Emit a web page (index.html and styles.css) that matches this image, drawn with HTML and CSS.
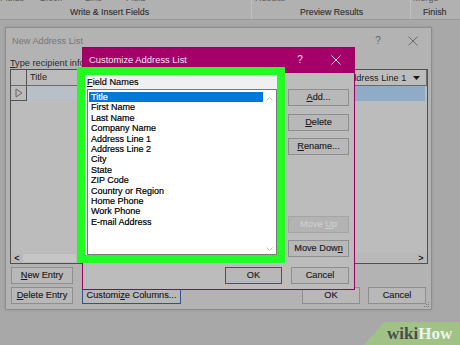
FILE: index.html
```html
<!DOCTYPE html>
<html lang="en">
<head>
<meta charset="utf-8">
<title>Customize Address List</title>
<link rel="stylesheet" href="styles.css">
</head>
<body>
<div class="screen">
  <header class="ribbon">
    <div class="group g1">
      <div class="frag"><span class="f1">Fields</span><span class="f2">Block</span><span class="f3">Line</span><span class="f4">Field</span></div>
      <div class="glabel">Write &amp; Insert Fields</div>
    </div>
    <div class="group g2">
      <div class="frag"><span class="f5">Results</span></div>
      <div class="glabel">Preview Results</div>
    </div>
    <div class="group g3">
      <div class="frag"><span class="f6">Merge</span></div>
      <div class="glabel">Finish</div>
    </div>
  </header>

  <section class="win win1">
    <div class="w1-title">
      <span class="w1-name">New Address List</span>
      <span class="w1-help">?</span>
      <span class="w1-close"><svg width="10" height="10" viewBox="0 0 10 10"><path d="M0.5 0.5L9.5 9.5M9.5 0.5L0.5 9.5" stroke="#6a6a6a" stroke-width="1" fill="none"/></svg></span>
    </div>
    <div class="w1-info"><u>T</u>ype recipient information in the table. To add more entries, click New Entry.</div>
    <div class="table">
      <div class="trow thead">
        <div class="cell sel"></div>
        <div class="cell th">Title</div>
        <div class="cell th">First Name</div>
        <div class="cell th">Last Name</div>
        <div class="cell th th-dd"><span>Address Line 1</span><svg width="7" height="4" viewBox="0 0 7 4"><path d="M0 0H7L3.5 4Z" fill="#1a1a1a"/></svg></div>
      </div>
      <div class="trow tdata">
        <div class="cell sel"><svg width="8" height="10" viewBox="0 0 8 10"><path d="M1 1L7 5L1 9Z" fill="none" stroke="#666" stroke-width="1"/></svg></div>
        <div class="cell td"></div>
        <div class="cell td"></div>
        <div class="cell td"></div>
        <div class="cell td cur"></div>
      </div>
      <div class="tfill"></div>
      <div class="hscroll">
        <span class="arr">&lt;</span><span class="thumb"></span><span class="track"></span><span class="arr">&gt;</span>
      </div>
    </div>
    <div class="w1-actions">
      <div class="arow"><button class="btn b-w1"><u>N</u>ew Entry</button></div>
      <div class="arow">
        <button class="btn b-w1"><u>D</u>elete Entry</button>
        <button class="btn b-cc">Customi<u>z</u>e Columns...</button>
        <span class="grow"></span>
        <button class="btn b-ok">OK</button>
        <button class="btn b-ok b-cancel">Cancel</button>
      </div>
    </div>
    <svg class="grip" width="6" height="6" viewBox="0 0 6 6"><g fill="#7d7d7d"><rect x="4" y="0" width="1" height="1"/><rect x="2" y="2" width="1" height="1"/><rect x="4" y="2" width="1" height="1"/><rect x="0" y="4" width="1" height="1"/><rect x="2" y="4" width="1" height="1"/><rect x="4" y="4" width="1" height="1"/></g></svg>
  </section>

  <section class="win win2">
    <div class="w2-title">
      <span class="w2-name">Customize Address List</span>
      <span class="w2-help">?</span>
      <span class="w2-close"><svg width="10" height="10" viewBox="0 0 10 10"><path d="M0.5 0.5L9.5 9.5M9.5 0.5L0.5 9.5" stroke="#f3e3ee" stroke-width="1" fill="none"/></svg></span>
    </div>
    <div class="w2-body">
      <div class="w2-main">
        <div class="fields">
          <div class="flabel"><u>F</u>ield Names</div>
          <div class="listbox">
            <ul class="items">
              <li class="on">Title</li>
              <li>First Name</li>
              <li>Last Name</li>
              <li>Company Name</li>
              <li>Address Line 1</li>
              <li>Address Line 2</li>
              <li>City</li>
              <li>State</li>
              <li>ZIP Code</li>
              <li>Country or Region</li>
              <li>Home Phone</li>
              <li>Work Phone</li>
              <li>E-mail Address</li>
            </ul>
            <div class="vscroll">
              <svg width="7" height="4" viewBox="0 0 7 4"><path d="M0.5 3.5L3.5 0.5L6.5 3.5" fill="none" stroke="#c2c2c2" stroke-width="1"/></svg>
              <svg width="7" height="4" viewBox="0 0 7 4"><path d="M0.5 0.5L3.5 3.5L6.5 0.5" fill="none" stroke="#c2c2c2" stroke-width="1"/></svg>
            </div>
          </div>
        </div>
        <div class="btncol">
          <button class="btn b2 b-add"><u>A</u>dd...</button>
          <button class="btn b2 b-del"><u>D</u>elete</button>
          <button class="btn b2 b-ren"><u>R</u>ename...</button>
          <button class="btn b2 b-up" disabled>Move <u>U</u>p</button>
          <button class="btn b2 b-down">Move Dow<u>n</u></button>
        </div>
      </div>
      <div class="w2-foot">
        <button class="btn b2ok">OK</button>
        <button class="btn b2c">Cancel</button>
      </div>
    </div>
  </section>

  <div class="logo"><span class="wk">wiki</span><span class="hw">How</span></div>
</div>
</body>
</html>
```

FILE: styles.css
```css
* { box-sizing: border-box; }
html, body { margin: 0; padding: 0; }
body {
  width: 460px;
  height: 345px;
  overflow: hidden;
  background: #a8a8a8;
  font-family: "Liberation Sans", Arial, sans-serif;
  color: #1d1d1d;
}
.screen { position: relative; width: 460px; height: 345px; overflow: hidden; background: #a8a8a8; }

/* ribbon */
.ribbon { display: flex; height: 20px; background: #b1b1b1; border-bottom: 1px solid #9b9b9b; }
.group { display: flex; flex-direction: column; justify-content: space-between; height: 19px; border-right: 1px solid #c1c1c1; }
.g1 { width: 252px; }
.g2 { width: 159px; }
.g3 { flex: 1; border-right: none; }
.frag { height: 3px; overflow: hidden; display: flex; color: #5c5c5c; font-size: 9px; white-space: nowrap; }
.frag span { line-height: 10px; margin-top: -7px; }
.f2 { margin-left: 16px; }
.f3 { margin-left: 23px; }
.f4 { margin-left: 24px; }
.f5 { margin-left: 3px; }
.f6 { margin-left: 2px; }
.glabel { font-size: 8.8px; line-height: 11px; padding-bottom: 1px; color: #333; white-space: nowrap; -webkit-text-stroke: 0.15px #333; }
.g1 .glabel { padding-left: 70px; }
.g2 .glabel { padding-left: 48px; }
.g3 .glabel { padding-left: 12px; }

/* windows */
.win { position: absolute; }

.win1 {
  left: 5px; top: 27px; width: 427px; height: 283px;
  background: #b3b3b3;
  border: 1px solid #8d8d8d;
  box-shadow: 0 0 3px rgba(0,0,0,0.12);
  display: flex; flex-direction: column;
}
.w1-title { height: 25px; flex: none; display: flex; align-items: center; padding-left: 6px; font-size: 9.2px; color: #767676; }
.w1-name { flex: 1; }
.w1-help { width: 16px; text-align: center; font-size: 10px; color: #666; }
.w1-close { width: 20px; margin: 0 8px 0 17px; display: flex; justify-content: center; }
.w1-info { margin-top: 4px; padding-left: 4px; font-size: 9.2px; line-height: 12px; color: #2b2b2b; white-space: nowrap; overflow: hidden; flex: none; }

.table {
  margin: 0 3px 0 4px; height: 195px; flex: none;
  border: 1px solid #4f4f4f; background: #bcbcbc;
  display: flex; flex-direction: column;
}
.trow { display: grid; grid-template-columns: 16px 100px 110px 1fr 85px; height: 15px; flex: none; }
.thead { height: 16px; border-bottom: 1px solid #6a6a6a; }
.cell { font-size: 9.2px; line-height: 14px; color: #222; white-space: nowrap; overflow: hidden; }
.th { border-right: 1px solid #6f6f6f; padding-left: 3px; }
.th-dd { display: flex; align-items: center; justify-content: space-between; padding-right: 6px; }
.sel { border-right: 1px solid #555; display: flex; align-items: center; justify-content: center; }
.tdata .sel { border-bottom: 1px solid #555; }
.td { background: #b8bfc6; }
.td.cur { background: #8eabc7; margin-right: 2px; }
.tfill { flex: 1; }
.hscroll { height: 10px; flex: none; display: flex; align-items: center; background: #b9b9b9; }
.arr { width: 12px; text-align: center; font-size: 9px; font-weight: bold; line-height: 10px; color: #222; }
.thumb { width: 53px; height: 8px; background: #c6c6c6; }
.track { flex: 1; }

.w1-actions { padding: 3px 5px 0 5px; display: flex; flex-direction: column; gap: 3px; }
.arow { display: flex; gap: 9px; }
.grow { flex: 1; }
.btn {
  height: 17px; margin: 0; padding: 0;
  border: 1px solid #8e8e8e; background: #b8b8b8;
  font-family: inherit; font-size: 9.2px; line-height: 15px; color: #1c1c1c;
  text-align: center; white-space: nowrap;
  -webkit-text-stroke: 0.15px currentColor;
}
.b-w1 { width: 62px; }
.b-cc { width: 99px; border-color: #33518c; }
.b-ok { width: 58px; }
.b-cancel { margin-left: -1px; }
.grip { position: absolute; right: 1px; bottom: 1px; }

/* customize dialog */
.win2 {
  left: 82px; top: 47px; width: 273px; height: 243px;
  border: 1px solid #9c005b; background: #bcbcbc;
  display: flex; flex-direction: column;
}
.w2-title { height: 25px; flex: none; background: #a5006a; color: #f2e4ee; display: flex; align-items: center; padding: 0 0 2px 6px; font-size: 9.4px; }
.w2-name { flex: 1; }
.w2-help { width: 16px; text-align: center; font-size: 10px; margin-right: 18px; }
.w2-close { width: 20px; margin-right: 8px; display: flex; justify-content: center; }
.w2-body { padding: 2px 5px 5px 2px; }
.w2-main { display: flex; gap: 11px; }
.fields {
  width: 192px; height: 180px; flex: none;
  background: #f0f0f0; outline: 8px solid #22fc22;
  padding-left: 2px; display: flex; flex-direction: column;
}
.flabel { height: 14px; line-height: 14px; font-size: 9.2px; color: #000; -webkit-text-stroke: 0.15px #000; }
.listbox { flex: 1; border: 1px solid #7a7a7a; background: #fff; display: flex; }
.items { flex: 1; list-style: none; margin: 0; padding: 2px 0 0 1px; }
.items li { font-size: 9px; line-height: 10.4px; height: 10.4px; padding-left: 2px; color: #000; white-space: nowrap; -webkit-text-stroke: 0.2px #000; }
.items li.on { background: #0078d7; color: #fff; -webkit-text-stroke: 0.2px #fff; }
.vscroll { width: 13px; display: flex; flex-direction: column; align-items: center; justify-content: space-between; padding: 7px 0 3px; }

.btncol { width: 61px; height: 182px; flex: none; display: flex; flex-direction: column; padding-top: 14px; }
.b2 { width: 61px; }
.b-del { margin-top: 8px; }
.b-ren { margin-top: 7px; }
.b-up { margin-top: auto; color: #cfcfcf; background: #b3b3b3; border-color: #a4a4a4; }
.b-down { margin-top: 7px; }
.w2-foot { display: flex; justify-content: flex-end; gap: 9px; margin-top: 10px; }
.b2ok { width: 57px; border-color: #2e5894; }
.b2c { width: 58px; }

/* logo */
.logo {
  position: absolute; left: 364px; top: 322px; width: 96px; height: 23px;
  background: #a0c287;
  clip-path: polygon(20px 0, 100% 0, 100% 100%, 0 100%);
  padding-left: 23px;
  font-family: "Liberation Serif", "Times New Roman", serif; font-weight: bold; font-size: 17px; line-height: 23px;
  white-space: nowrap;
}
.logo .wk { color: #4d4d4d; }
.logo .hw { color: #eef3e8; }
```
